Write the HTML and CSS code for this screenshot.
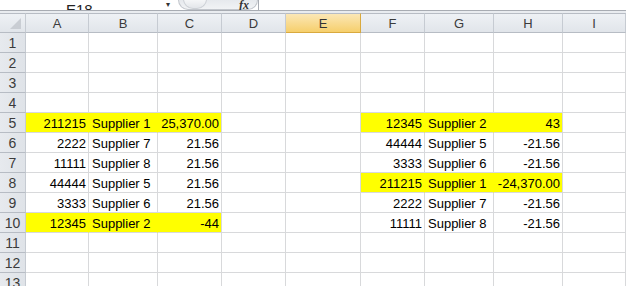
FILE: index.html
```html
<!DOCTYPE html>
<html>
<head>
    <meta charset="UTF-8">
    <title>Suppliers</title>
    <link rel="stylesheet" href="styles.css">
</head>
<body>
    <div class="toolbar">
        <div class="namebox"><span class="name">E18</span><span class="arrow">&#9662;</span></div>
        <div class="pill"><span class="knob"></span><span class="fx">fx</span></div>
        <div class="formula"></div>
    </div>
    <div class="band"></div>

    <div class="sheet">
        <div class="corner"><span class="tri"></span></div>
        <div class="col">A</div>
        <div class="col">B</div>
        <div class="col">C</div>
        <div class="col">D</div>
        <div class="col active">E</div>
        <div class="col">F</div>
        <div class="col">G</div>
        <div class="col">H</div>
        <div class="col">I</div>
    </div>
    <div class="sheet" id="rows"></div>

<script>
        // rows 1..13, data rows start at 5
        var left = [
            ["211215", "Supplier 1", "25,370.00", true],
            ["2222", "Supplier 7", "21.56"],
            ["11111", "Supplier 8", "21.56"],
            ["44444", "Supplier 5", "21.56"],
            ["3333", "Supplier 6", "21.56"],
            ["12345", "Supplier 2", "-44", true]
        ];
        var right = [
            ["12345", "Supplier 2", "43", true],
            ["44444", "Supplier 5", "-21.56"],
            ["3333", "Supplier 6", "-21.56"],
            ["211215", "Supplier 1", "-24,370.00", true],
            ["2222", "Supplier 7", "-21.56"],
            ["11111", "Supplier 8", "-21.56"]
        ];

        function cell(text, cls) {
            return '<div class="cell ' + (cls || "") + '">' + (text || "") + '</div>';
        }

        function block(item) {
            if (!item) return cell() + cell() + cell();
            var hl = item[3] ? " hl" : "";
            return cell(item[0], "num" + hl + " join") +
                   cell(item[1], "txt" + hl + " join") +
                   cell(item[2], "num" + hl);
        }

        var html = "";
        for (var r = 1; r <= 13; r++) {
            html += '<div class="rowhead">' + r + '</div>';
            html += block(left[r - 5]);
            html += cell() + cell();
            html += block(right[r - 5]);
            html += cell();
        }
        document.getElementById("rows").innerHTML = html;
    </script>
</body>
</html>
```

FILE: styles.css
```css
body {
    margin: 0;
    padding: 0;
    background-color: #fff;
    font-family: "Liberation Sans", Arial, sans-serif;
    overflow: hidden;
}

.toolbar {
    display: flex;
    height: 10px;
    overflow: hidden;
    border-bottom: 1px solid #a8acb3;
}

.namebox {
    width: 178px;
    display: flex;
    justify-content: space-between;
    align-items: flex-end;
    background-color: #fff;
    overflow: hidden;
}

.name {
    margin-left: 66px;
    margin-bottom: -7px;
    font-size: 15px;
    line-height: 15px;
    color: #222;
}

.arrow {
    margin-right: 8px;
    margin-bottom: 1px;
    font-size: 8px;
    line-height: 8px;
    color: #333;
}

.pill {
    width: 80px;
    display: flex;
    justify-content: space-between;
    align-items: flex-end;
    background: linear-gradient(#e6e9ed, #f1f3f5);
    border-radius: 0 0 12px 12px;
    border: 1px solid #c2c6cc;
    border-top: none;
    box-sizing: border-box;
}

.knob {
    width: 22px;
    height: 9px;
    margin-left: 4px;
    border-radius: 0 0 11px 11px;
    background: linear-gradient(#f7f8f9, #e3e6ea);
    border: 1px solid #cdd1d6;
    border-top: none;
}

.fx {
    margin-right: 8px;
    margin-bottom: -1px;
    font-family: "Liberation Serif", serif;
    font-style: italic;
    font-weight: bold;
    font-size: 12px;
    line-height: 10px;
    color: #333;
}

.formula {
    flex: 1;
    background-color: #fff;
    border-left: 1px solid #a8acb3;
}

.band {
    height: 2px;
    background-color: #e9ecf0;
}

.sheet {
    display: grid;
    grid-template-columns: 26px 63px 69px 64px 64px 75px 64px 69px 69px 63px;
    grid-auto-rows: 20px;
}

.corner,
.col,
.rowhead {
    box-sizing: border-box;
    background: linear-gradient(#eef1f5, #e1e5ea);
    border-right: 1px solid #c6cbd2;
    border-bottom: 1px solid #b7bcc4;
    color: #3b3b3b;
    font-size: 13px;
    display: flex;
    align-items: center;
    justify-content: center;
}

.corner {
    justify-content: flex-end;
    align-items: flex-end;
    padding: 0 4px 3px 0;
    border-top: 1px solid #b7bcc4;
}

.col {
    border-top: 1px solid #b7bcc4;
}

.tri {
    width: 0;
    height: 0;
    border-left: 11px solid transparent;
    border-bottom: 11px solid #c9cdd3;
}

.col.active {
    background: linear-gradient(#fbe7b6, #f6cf6c);
    border-right-color: #d9a93e;
    border-bottom-color: #d9a93e;
    color: #333;
}

.rowhead {
    background: linear-gradient(90deg, #e7eaee, #dfe3e8);
    font-size: 14px;
}

.cell {
    box-sizing: border-box;
    border-right: 1px solid #d8d9db;
    border-bottom: 1px solid #d8d9db;
    font-size: 13px;
    color: #000;
    display: flex;
    align-items: center;
    padding: 1px 2px 0 3px;
    white-space: nowrap;
    overflow: hidden;
}

.num {
    justify-content: flex-end;
}

.hl {
    background-color: #ffff00;
}

.hl.join {
    border-right-color: #ffff00;
}
```
